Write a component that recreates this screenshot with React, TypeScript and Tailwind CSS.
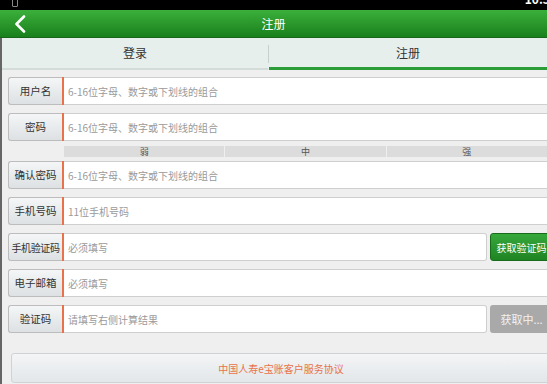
import { ReactNode } from 'react'

const font = { fontFamily: '"Noto Sans CJK SC", "Noto Sans", sans-serif' }

function Row({
  label,
  placeholder,
  small,
  action,
}: {
  label: string
  placeholder: string
  small?: boolean
  action?: ReactNode
}) {
  return (
    <div className="flex h-[28px] items-stretch">
      <div
        className={[
          'flex w-[54px] shrink-0 items-center justify-center rounded-l-[3px] border border-r-0 border-[#bcbcbc] bg-gradient-to-b from-[#f4f6f7] to-[#dde1e3] text-[#333]',
          small ? 'text-[10px] tracking-[-0.4px]' : 'text-[10.5px]',
        ].join(' ')}
      >
        {label}
      </div>
      <div className="w-[2px] shrink-0 bg-[#e8724a]" />
      <div
        className={[
          'flex min-w-0 flex-1 items-center border border-l-0 border-[#cfcfcf] bg-white pl-[4px] text-[10px] text-[#9a9a9a]',
          action ? 'rounded-r-[3px]' : 'mr-[-4px]',
        ].join(' ')}
      >
        {placeholder}
      </div>
      {action}
    </div>
  )
}

export default function App() {
  return (
    <div className="flex h-[384px] w-[547px] flex-col overflow-hidden bg-[#efefef]" style={font}>
      {/* status bar */}
      <div className="relative h-[10px] shrink-0 overflow-hidden bg-black">
        <div className="absolute left-[12px] top-[-3px] h-[10px] w-[6px] rounded-[1px] border border-[#888]" />
        <div className="absolute right-[-10px] top-[-10px] text-[12px] font-bold text-white">10:52</div>
      </div>

      {/* header */}
      <div className="relative flex h-[28px] shrink-0 items-center justify-center border-b border-[#17661a] bg-gradient-to-b from-[#3bb03b] to-[#18801c]">
        <svg className="absolute left-[14px] top-[5px]" width="12" height="18" viewBox="0 0 12 18">
          <path d="M10 1.5 L2.5 9 L10 16.5" fill="none" stroke="white" strokeWidth="2.6" strokeLinecap="round" strokeLinejoin="round" />
        </svg>
        <span className="text-[12px] text-white">注册</span>
      </div>

      <div className="flex flex-1 flex-col border-l-2 border-[#666]">
        {/* tabs */}
        <div className="flex h-[32px] shrink-0 bg-[#e7efed]">
          <div className="flex w-[266px] items-center justify-center border-b-2 border-[#d3dcd8] text-[12px] text-[#333]">
            登录
          </div>
          <div className="my-[7px] w-[1px] bg-[#c8d0cd]" />
          <div className="flex flex-1 items-center justify-center border-b-[3px] border-[#2a9d38] text-[12px] text-[#333]">
            注册
          </div>
        </div>

        {/* form */}
        <div className="flex flex-col pl-[6px] pt-[7px]">
          <Row label="用户名" placeholder="6-16位字母、数字或下划线的组合" />
          <div className="mt-[8px]">
            <Row label="密码" placeholder="6-16位字母、数字或下划线的组合" />
          </div>
          <div className="ml-[56px] mt-[5px] flex h-[11px] gap-[1px] text-[9px] leading-[11px] text-[#555]">
            <div className="flex flex-1 justify-center bg-[#dcdcdc]">弱</div>
            <div className="flex flex-1 justify-center bg-[#dcdcdc]">中</div>
            <div className="flex flex-1 justify-center bg-[#dcdcdc]">强</div>
          </div>
          <div className="mt-[4px]">
            <Row label="确认密码" placeholder="6-16位字母、数字或下划线的组合" />
          </div>
          <div className="mt-[8px]">
            <Row label="手机号码" placeholder="11位手机号码" />
          </div>
          <div className="mt-[8px]">
            <Row
              label="手机验证码"
              placeholder="必须填写"
              small
              action={
                <button className="ml-[3px] mr-[-6px] flex w-[63px] shrink-0 items-center justify-center whitespace-nowrap rounded-[3px] border border-[#176b1b] bg-gradient-to-b from-[#36a83a] to-[#1f8423] text-[10px] text-white">
                  获取验证码
                </button>
              }
            />
          </div>
          <div className="mt-[8px]">
            <Row label="电子邮箱" placeholder="必须填写" />
          </div>
          <div className="mt-[8px]">
            <Row
              label="验证码"
              placeholder="请填写右侧计算结果"
              action={
                <button className="ml-[3px] mr-[-6px] flex w-[63px] shrink-0 items-center justify-center whitespace-nowrap rounded-[3px] bg-[#a9a9a9] text-[11px] text-[#f2f2f2]">
                  获取中...
                </button>
              }
            />
          </div>

          {/* agreement */}
          <div className="ml-[3px] mr-[-4px] mt-[20px] flex h-[30px] items-center justify-center rounded-[3px] border border-[#d0d3d5] bg-gradient-to-b from-[#f3f5f6] to-[#e3e7e9] text-[10px] text-[#e8724a]">
            中国人寿e宝账客户服务协议
          </div>
        </div>
      </div>
    </div>
  )
}
